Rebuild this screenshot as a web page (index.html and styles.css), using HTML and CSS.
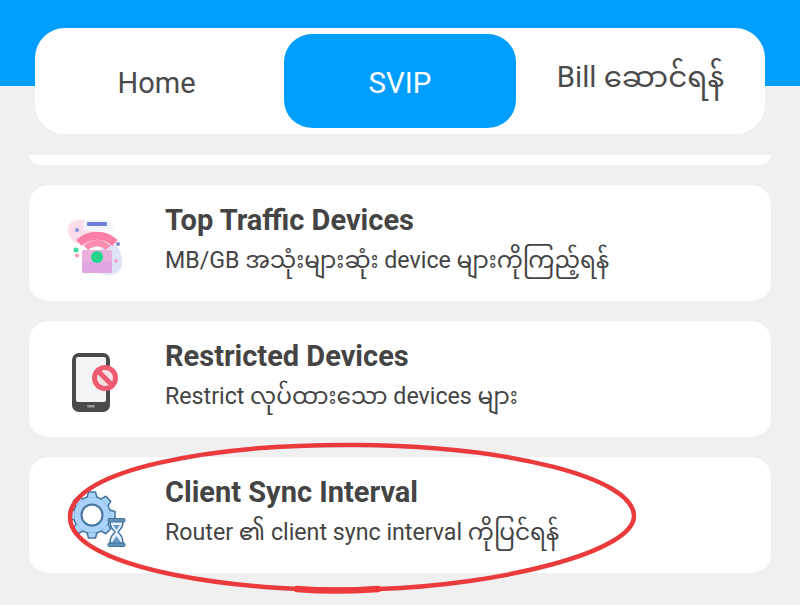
FILE: index.html
```html
<!DOCTYPE html>
<html lang="my">
<head>
<meta charset="utf-8">
<title>SVIP</title>
<link rel="stylesheet" href="styles.css">
</head>
<body>
<header class="top">
  <nav class="tabs">
    <div class="tab tab-home">Home</div>
    <div class="tab tab-active">SVIP</div>
    <div class="tab tab-bill">Bill ဆောင်ရန်</div>
  </nav>
</header>
<main class="list">
  <div class="stub"></div>
  <section class="card">
    <svg class="icon" viewBox="0 0 80 80">
      <g class="soft">
        <path d="M13 21c6-6 16-5 24 0 5 4 2 12-4 17-6 4-14 4-18-1-4-5-6-12-2-16z" fill="#fbdcea"/>
        <path d="M44 46c6-7 13-7 17-1 6 9 6 22-3 26-9 3-22-1-20-10 1-6 3-11 6-15z" fill="#dfe3f8"/>
        <rect x="26" y="17" width="30" height="11" rx="4" fill="#f3f3fa"/>
        <rect x="30" y="19" width="20" height="4" rx="1" fill="#6f7fd8"/>
        <rect x="25" y="47" width="30" height="23" rx="2" fill="#e8b0dc"/>
        <rect x="25" y="59" width="30" height="11" rx="2" fill="#dfa6e2"/>
        <path d="M22 40A26 26 0 0 1 58 40" fill="none" stroke="#fb7ea6" stroke-width="8"/>
        <path d="M29 45A15 15 0 0 1 51 45" fill="none" stroke="#fb8db0" stroke-width="6.500"/>
        <circle cx="40" cy="54" r="6" fill="#22d68c"/>
        <circle cx="19" cy="47" r="2.500" fill="#3fdca6"/>
        <circle cx="20" cy="52.500" r="2" fill="#f29aa8"/>
        <circle cx="20" cy="27" r="2" fill="#8c90d8"/>
        <circle cx="61" cy="41" r="2" fill="#7c86cc"/>
        <circle cx="59" cy="58" r="2" fill="#eba4c8"/>
      </g>
    </svg>
    <div class="text">
      <h2 class="title">Top Traffic Devices</h2>
      <p class="sub">MB/GB အသုံးများဆုံး device များကိုကြည့်ရန်</p>
    </div>
  </section>
  <section class="card">
    <svg class="icon" viewBox="0 0 80 80">
      <g class="soft">
        <rect x="15" y="14" width="38" height="59" rx="7" fill="#4a4a4c"/>
        <rect x="19" y="18" width="30" height="45" rx="2" fill="#f4f4f6"/>
        <rect x="30" y="66" width="8" height="2.500" rx="1.200" fill="#9a9a9c"/>
        <circle cx="48" cy="39" r="13" fill="#ef5c72"/>
        <circle cx="48" cy="39" r="8" fill="#f3e2e4"/>
        <path d="M41 32 55 46" stroke="#ef5c72" stroke-width="5"/>
      </g>
    </svg>
    <div class="text">
      <h2 class="title">Restricted Devices</h2>
      <p class="sub">Restrict လုပ်ထားသော devices များ</p>
    </div>
  </section>
  <section class="card">
    <svg class="icon" viewBox="0 0 80 80">
      <defs>
        <path id="tooth" d="M-5 -17.500L-3.500 -23H3.500L5 -17.500" fill="#a9d3fb" stroke="#44739c" stroke-width="1.500" stroke-linejoin="round"/>
      </defs>
      <g class="soft-light">
        <g transform="translate(35 40)">
          <circle r="18.500" fill="#a9d3fb" stroke="#44739c" stroke-width="1.500"/>
          <use href="#tooth"/>
          <use href="#tooth" transform="rotate(45)"/>
          <use href="#tooth" transform="rotate(90)"/>
          <use href="#tooth" transform="rotate(135)"/>
          <use href="#tooth" transform="rotate(180)"/>
          <use href="#tooth" transform="rotate(225)"/>
          <use href="#tooth" transform="rotate(270)"/>
          <use href="#tooth" transform="rotate(315)"/>
          <circle r="10.500" fill="#fff" stroke="#44739c" stroke-width="2"/>
        </g>
        <path d="M53 46h13c0 8-4 9-5 11 1 2 5 3 5 11H53c0-8 4-9 5-11-1-2-5-3-5-11z" fill="#e6f3ff" stroke="#44739c" stroke-width="1.500"/>
        <path d="M56 50h7l-3.500 5zM54.500 68l5-7 5 7z" fill="#6a9cc4"/>
        <rect x="51" y="43.500" width="17" height="3.500" rx="1" fill="#5f90b8" stroke="#44739c"/>
        <rect x="51" y="68" width="17" height="3.500" rx="1" fill="#5f90b8" stroke="#44739c"/>
      </g>
    </svg>
    <div class="text">
      <h2 class="title">Client Sync Interval</h2>
      <p class="sub">Router ၏ client sync interval ကိုပြင်ရန်</p>
    </div>
  </section>
</main>
<svg class="circle" viewBox="0 0 800 605">
  <path class="ring" d="M378 589C250 595 68 570 70 516 72 470 210 444 355 445 510 446 634 478 634 516 634 552 500 585 378 589"/>
  <path class="ring-end" d="M378 589C350 591 320 591 297 589"/>
</svg>
</body>
</html>
```
FILE: styles.css
```css
* { box-sizing: border-box; }
html, body { margin: 0; padding: 0; }
body {
  width: 800px;
  height: 605px;
  overflow: hidden;
  position: relative;
  background: #f0f0f0;
  font-family: Roboto, "Noto Sans", "Noto Sans Myanmar", sans-serif;
  color: #444;
}
.top {
  height: 86px;
  padding: 28px 35px 0;
  background: #009fff;
}
.tabs {
  height: 106px;
  padding: 6px 0;
  display: grid;
  grid-template-columns: 249px 232px 249px;
  background: #fff;
  border-radius: 30px;
}
.tab {
  display: flex;
  align-items: center;
  justify-content: center;
  padding-top: 3px;
  font-size: 29px;
  font-weight: 400;
  color: #4a4a4a;
}
.tab-home { padding-right: 6px; }
.tab-active {
  background: #009fff;
  color: #fff;
  border-radius: 28px;
  font-size: 29.500px;
}
.tab-bill {
  padding: 0 0 2px;
  font-size: 29.300px;
  white-space: nowrap;
}
.list {
  margin-top: 69px;
  padding: 0 29px;
  display: flex;
  flex-direction: column;
  gap: 20px;
}
.stub {
  height: 10px;
  background: #fff;
  border-radius: 0 0 14px 14px;
}
.card {
  height: 116px;
  display: flex;
  align-items: center;
  background: #fff;
  border-radius: 20px;
  padding: 0 16px 0 28px;
}
.icon {
  width: 80px;
  height: 80px;
  flex: none;
}
.soft { filter: blur(0.6px); }
.soft-light { filter: blur(0.3px); }
.text {
  margin-left: 28px;
  padding-bottom: 7px;
}
.title {
  margin: 0;
  font-size: 29px;
  line-height: 36px;
  font-weight: 700;
  color: #444;
}
.sub {
  margin: 5px 0 0;
  font-size: 23.200px;
  line-height: 34px;
  font-weight: 400;
  color: #444;
  white-space: nowrap;
}
.circle {
  position: absolute;
  left: 0;
  top: 0;
  width: 800px;
  height: 605px;
  pointer-events: none;
}
.ring {
  fill: none;
  stroke: #ea3a3c;
  stroke-width: 4.500px;
}
.ring-end {
  fill: none;
  stroke: #ee3a3c;
  stroke-width: 6.500px;
  stroke-linecap: round;
}
```
